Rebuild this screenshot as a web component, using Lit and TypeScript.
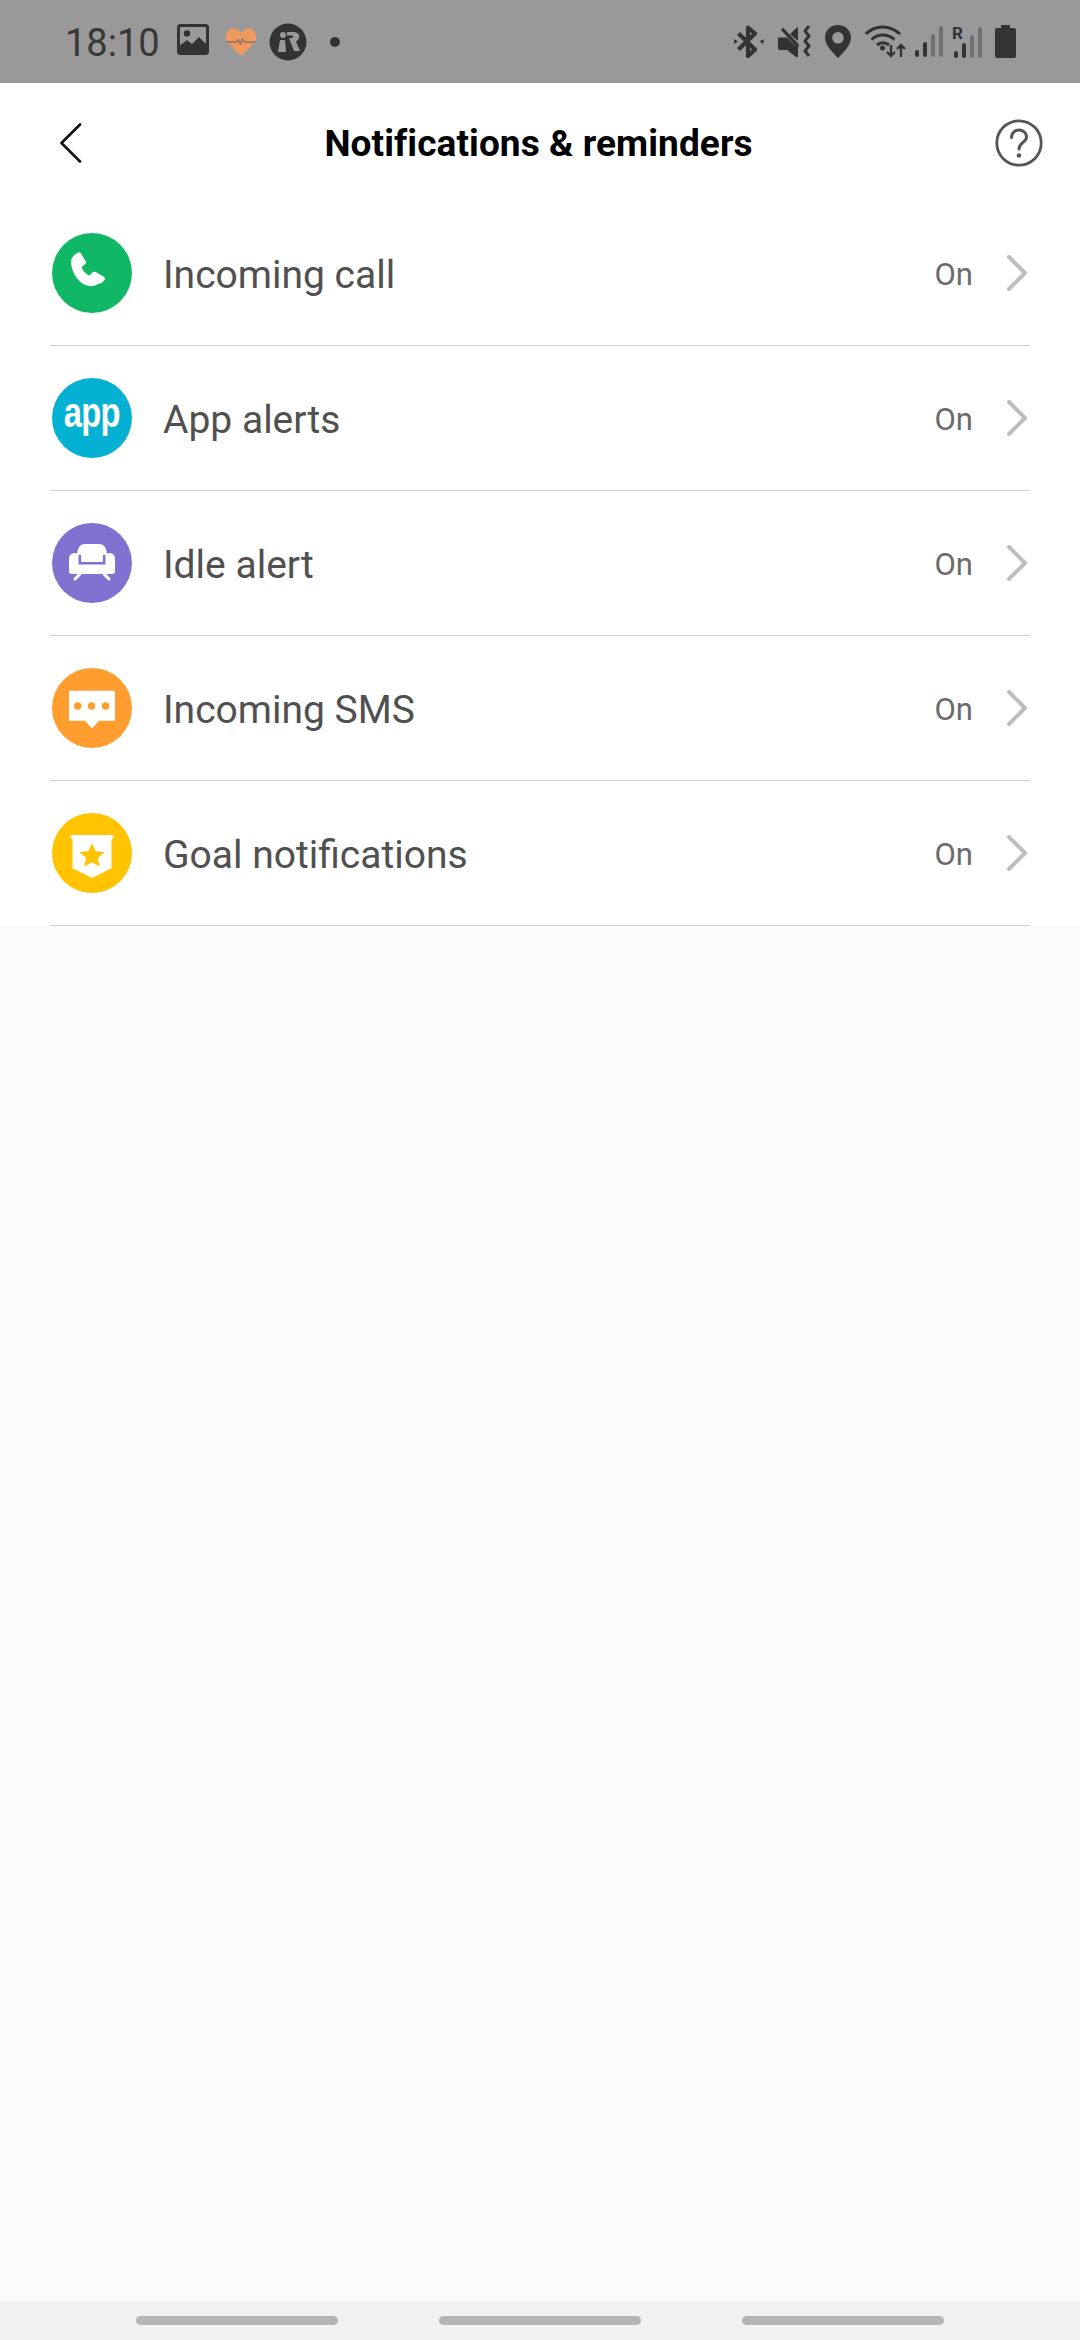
import { LitElement, html, css, svg } from 'lit';
import { customElement } from 'lit/decorators.js';

const rows = [
  {
    label: 'Incoming call',
    color: '#10b765',
    icon: svg`<path fill="#fff" d="M25.500 19.800c1.500-.8 3-.3 3.800 1l4.200 7.200c.8 1.300.5 2.500-.5 3.300l-2.800 2.300c-.5.500-.6 1-.3 1.700 1.500 3 3.500 5.200 6.500 7 .6.3 1.100.3 1.600-.2l2.300-2.500c1-1 2.200-1.200 3.400-.5l7.800 4.400c1.400.8 1.700 2.300.9 3.600-1.100 1.900-2.900 3.400-5.400 3.500C34 59 20.500 45 19 30c-.5-4 2.500-8.200 6.500-10.200z"/>`,
  },
  {
    label: 'App alerts',
    color: '#05b1d2',
    icon: html`<span class="app-text">app</span>`,
  },
  {
    label: 'Idle alert',
    color: '#8172d2',
    icon: svg`<path fill="#fff" d="M25 33c0-8 3-12 8-12h14c5 0 8 4 8 12v8H25z"/>
      <rect x="17" y="30" width="11" height="21" rx="5.500" fill="#fff"/>
      <rect x="52" y="30" width="11" height="21" rx="5.500" fill="#fff"/>
      <rect x="17" y="40" width="46" height="11" rx="3" fill="#fff"/>
      <path fill="none" stroke="#8172d2" stroke-width="2.600" d="M27.800 32c0 0 0 .5 0 8.300h24.400V32"/>
      <path fill="none" stroke="#fff" stroke-width="3" stroke-linecap="round" d="M28 51l-5 5M52 51l5 5"/>`,
  },
  {
    label: 'Incoming SMS',
    color: '#ff9d2e',
    icon: svg`<path fill="#fff" d="M17 24c0-.8.5-1.300 1.300-1.300h43.400c.8 0 1.300.5 1.300 1.300v27.500c0 .8-.5 1.300-1.300 1.300H47L40 60.500l-7-7.700H18.300c-.8 0-1.300-.5-1.300-1.300z"/>
      <circle cx="25.700" cy="38" r="3.700" fill="#ff9d2e"/>
      <circle cx="39.500" cy="38" r="3.700" fill="#ff9d2e"/>
      <circle cx="53.500" cy="38" r="3.700" fill="#ff9d2e"/>`,
  },
  {
    label: 'Goal notifications',
    color: '#ffc300',
    icon: svg`<path fill="#fff" d="M20 22h40c1.200 0 1.700.8 1.400 1.800l-.3 1c-.3.900-.9 1.200-1.600 1.200v29.200L40 65 20.500 55.200V26c-.7 0-1.300-.3-1.600-1.200l-.3-1c-.3-1 .2-1.800 1.400-1.800z"/>
      <path fill="#ffc300" d="M40 30l3.600 8.300 8.900.8-6.700 5.900 2 8.800-7.800-4.600-7.800 4.600 2-8.800-6.700-5.900 8.900-.8z"/>`,
  },
];

@customElement('app-root')
export class AppRoot extends LitElement {
  static styles = css`
    :host {
      display: flex;
      flex-direction: column;
      width: 1080px;
      height: 2340px;
      background: #fbfbfb;
      font-family: Roboto, sans-serif;
    }

    .status {
      height: 83px;
      background: #999;
      display: flex;
      align-items: center;
      padding: 0 64px 0 65px;
      color: #333;
      flex: none;
    }

    .time {
      font-size: 38px;
      line-height: 1;
      width: 112px;
      margin-top: 2px;
      opacity: .95;
    }

    .status svg {
      display: block;
      flex: none;
    }

    .spacer {
      flex: 1;
    }

    .header {
      height: 116px;
      padding: 2px 37px 0 60px;
      background: #fff;
      display: flex;
      align-items: center;
      flex: none;
    }

    .title {
      flex: 1;
      text-align: center;
      font-size: 37px;
      font-weight: 700;
      letter-spacing: .08px;
      color: #000;
    }

    .list {
      background: #fff;
      flex: none;
    }

    .row {
      height: 144px;
      margin: 0 50px;
      border-bottom: 1px solid #cfcfcf;
      display: flex;
      align-items: center;
      padding-left: 2px;
      padding-right: 3px;
    }

    .circle {
      width: 80px;
      height: 80px;
      border-radius: 50%;
      display: flex;
      align-items: center;
      justify-content: center;
      margin-top: -1px;
      flex: none;
    }

    .circle svg {
      width: 80px;
      height: 80px;
      display: block;
    }

    .app-text {
      font-family: 'Liberation Sans Narrow', 'Liberation Sans', sans-serif;
      font-size: 43px;
      font-weight: 700;
      color: #fff;
      letter-spacing: -1px;
      line-height: 1;
      transform: scaleX(.76) translateY(-5px);
    }

    .label {
      flex: 1;
      margin-left: 31px;
      font-size: 39px;
      color: #505050;
      margin-top: 3px;
    }

    .value {
      font-size: 31px;
      color: #6b6b6b;
      margin-right: 34px;
      margin-top: 3px;
    }

    .chevron {
      width: 20px;
      height: 36px;
      display: block;
    }

    .fill {
      flex: 1;
    }

    .nav {
      height: 39px;
      background: #f1f1f1;
      display: flex;
      justify-content: center;
      gap: 101px;
      padding-top: 15px;
      box-sizing: border-box;
      flex: none;
    }

    .nav span {
      width: 202px;
      height: 9px;
      border-radius: 5px;
      background: #b5b5b5;
    }
  `;

  statusLeft() {
    return html`
      <svg width="32" height="31" viewBox="0 0 32 31" style="margin-top:-4px">
        <rect x="1.500" y="1.500" width="29" height="28" rx="2" fill="none" stroke="#333" stroke-width="3"/>
        <circle cx="10" cy="9.500" r="3.200" fill="#333"/>
        <path fill="#333" d="M2 28v-6l8-6 5 4 7-7 8 8v7z"/>
      </svg>
      <svg width="32" height="30" viewBox="0 0 32 30" style="margin-left:16px">
        <path fill="#ef995f" d="M16 29L3 16C-1 11 1 1.500 8 1.500c3.500 0 6.500 2 8 5 1.500-3 4.500-5 8-5 7 0 9 9.500 5 14.500z"/>
        <path fill="none" stroke="#8d7363" stroke-width="1.500" d="M1 15h10l2-2 2.500 4 2-5 2 3h11"/>
      </svg>
      <svg width="38" height="38" viewBox="0 0 38 38" style="margin-left:12px">
        <circle cx="19" cy="19" r="18.500" fill="#333"/>
        <circle cx="14" cy="12" r="3" fill="#999"/>
        <path fill="#999" d="M11 17h5l1 12h-8zM18 9h7c6 0 7 7 2 9.500l4 9.500h-6l-5-13h2.500c2 0 2-2.500 0-2.500H18z"/>
      </svg>
      <svg width="10" height="10" viewBox="0 0 10 10" style="margin-left:23px">
        <circle cx="5" cy="5" r="5" fill="#333"/>
      </svg>
    `;
  }

  statusRight() {
    return html`
      <svg width="30" height="33" viewBox="0 0 30 33">
        <path fill="none" stroke="#333" stroke-width="4.200" stroke-linejoin="round" d="M4.500 8.500l16.500 16-7 6.500V2.500l7 6-16.500 16"/>
        <path fill="#333" d="M0 14l4 2.500-4 2.500zM29.500 14l-4 2.500 4 2.500z"/>
      </svg>
      <svg width="34" height="33" viewBox="0 0 34 33" style="margin-left:14px">
        <path fill="#333" d="M0 12.500h6l3 0 11 11V31c0 1.500-1 1.800-2 1L9 25H2c-1.500 0-2-1-2-2zM5 2.500l16 17-1 4L3 5zM12 9l7-6.500c.5-.5 1-.3 1 .5v13z"/>
        <path fill="none" stroke="#333" stroke-width="3" stroke-linejoin="round" d="M31 1l-4 5 4 5-4 5 4 5-4 5 4 5"/>
      </svg>
      <svg width="26" height="33" viewBox="0 0 26 33" style="margin-left:13px">
        <path fill-rule="evenodd" fill="#333" d="M13 0C5.500 0 0 5.500 0 12.500 0 20 7 27 13 33c6-6 13-13 13-20.500C26 5.500 20.500 0 13 0zm0 7a5.800 5.800 0 1 1 0 11.600A5.800 5.800 0 0 1 13 7z"/>
      </svg>
      <svg width="42" height="33" viewBox="0 0 42 33" style="margin-left:14px">
        <path fill="none" stroke="#333" stroke-width="3" d="M1 9C10-.5 25-.5 35 9M6.500 14.500c6.500-6 16-6 23 0M12 20c3.500-3 8.500-3 12 0"/>
        <circle cx="17.500" cy="23" r="2.500" fill="#333"/>
        <path fill="none" stroke="#333" stroke-width="2.400" d="M26 20v11M22 27l4 4 4-4M36 32V20M32 24l4-4 4 4"/>
      </svg>
      <svg width="28" height="31" viewBox="0 0 28 31" style="margin-left:8px">
        <rect x="0" y="24" width="4" height="7" rx="2" fill="#333"/>
        <rect x="8" y="16" width="4" height="15" rx="2" fill="#333"/>
        <rect x="16" y="8" width="4" height="23" rx="2" fill="#707070"/>
        <rect x="24" y="0" width="4" height="31" rx="2" fill="#707070"/>
      </svg>
      <svg width="31" height="39" viewBox="-3 -6 31 39" style="margin:-6px 0 0 8px">
        <text x="-2" y="13.500" font-family="Roboto" font-size="17" font-weight="700" fill="#333">R</text>
        <rect x="0" y="26" width="4" height="7" rx="2" fill="#333"/>
        <rect x="8" y="18" width="4" height="15" rx="2" fill="#333"/>
        <rect x="16" y="10" width="4" height="23" rx="2" fill="#707070"/>
        <rect x="24" y="2" width="4" height="31" rx="2" fill="#707070"/>
      </svg>
      <svg width="21" height="33" viewBox="0 0 21 33" style="margin-left:13px">
        <path fill="#333" d="M6 0h9v3h4c1.200 0 2 .8 2 2v26c0 1.200-.8 2-2 2H2c-1.200 0-2-.8-2-2V5c0-1.200.8-2 2-2h4z"/>
      </svg>
    `;
  }

  render() {
    return html`
      <div class="status">
        <div class="time">18:10</div>
        ${this.statusLeft()}
        <div class="spacer"></div>
        ${this.statusRight()}
      </div>
      <div class="header">
        <svg width="22" height="40" viewBox="0 0 22 40">
          <path fill="none" stroke="#111" stroke-width="2.600" stroke-linecap="round" stroke-linejoin="round" d="M20 1.500L1.500 20 20 38.500"/>
        </svg>
        <div class="title">Notifications &amp; reminders</div>
        <svg width="48" height="48" viewBox="0 0 48 48">
          <circle cx="24" cy="24" r="22.200" fill="none" stroke="#555" stroke-width="2.800"/>
          <path fill="none" stroke="#555" stroke-width="3" stroke-linecap="round" d="M16.500 18.500c0-4.500 3.300-7.500 7.500-7.500s7.500 3 7.500 7c0 5.500-7.500 5.500-7.500 12"/>
          <circle cx="24" cy="36.500" r="2.300" fill="#555"/>
        </svg>
      </div>
      <div class="list">
        ${rows.map(r => html`
          <div class="row">
            <div class="circle" style="background:${r.color}">
              ${r.label === 'App alerts' ? r.icon : html`<svg viewBox="0 0 80 80">${r.icon}</svg>`}
            </div>
            <div class="label">${r.label}</div>
            <div class="value">On</div>
            <svg class="chevron" viewBox="0 0 20 36">
              <path fill="none" stroke="#bdbdbd" stroke-width="4" stroke-linecap="round" stroke-linejoin="round" d="M2 2l16 16L2 34"/>
            </svg>
          </div>
        `)}
      </div>
      <div class="fill"></div>
      <div class="nav"><span></span><span></span><span></span></div>
    `;
  }
}
